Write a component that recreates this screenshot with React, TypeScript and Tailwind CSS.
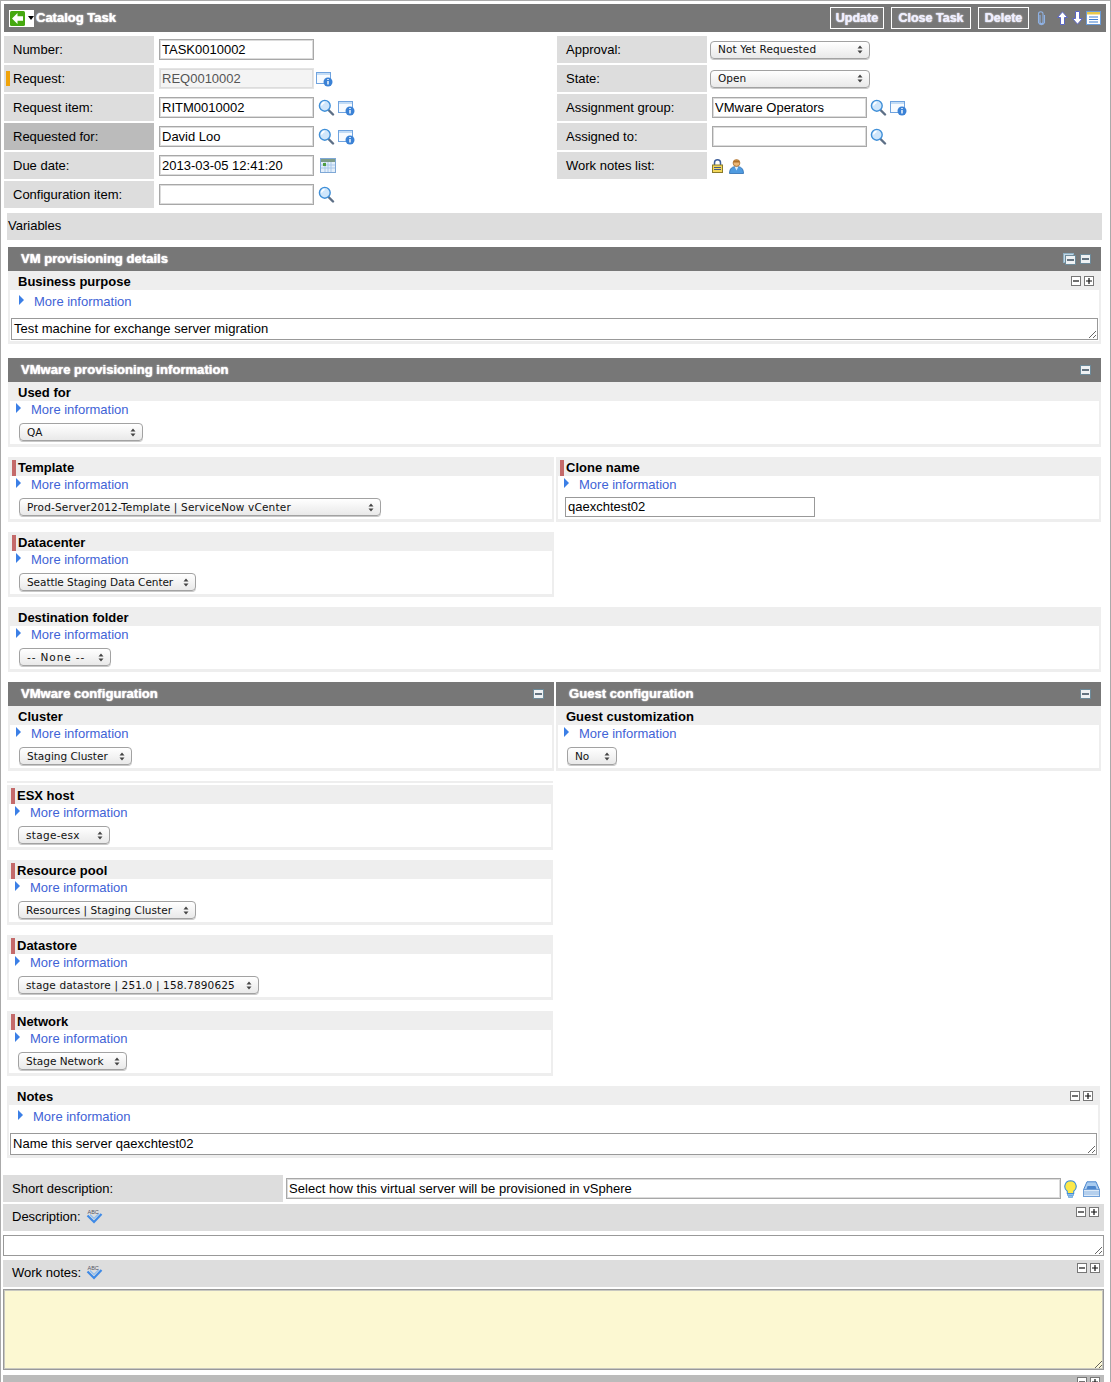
import React from "react";

const sans = "font-['Liberation_Sans',Arial,sans-serif]";
const glow = "[text-shadow:0_0_1px_#fff,0_0_2px_rgba(255,255,255,0.6)]";

const SearchIcon = () => (
  <svg width="17" height="17" viewBox="0 0 17 17" className="shrink-0">
    <path d="M10 10.5l5 5" stroke="#5d6f86" strokeWidth="2.4" strokeLinecap="round" />
    <circle cx="6.8" cy="6.8" r="5.4" fill="#cfe6fb" stroke="#3f8fd8" strokeWidth="1.4" />
    <path d="M3.6 6.5a3.4 3.4 0 0 1 3-3" stroke="#fff" strokeWidth="1.4" fill="none" />
  </svg>
);

const InfoIcon = () => (
  <svg width="17" height="16" viewBox="0 0 17 16" className="shrink-0">
    <rect x="0.5" y="1.5" width="14" height="11" fill="#f7fbff" stroke="#6fa3df" />
    <rect x="1" y="2" width="13" height="2" fill="#c3dcf5" />
    <circle cx="12" cy="11" r="4.5" fill="#3b82d6" />
    <path d="M12 10v3.4M12 8v1" stroke="#fff" strokeWidth="1.4" />
  </svg>
);

const CalendarIcon = () => (
  <svg width="16" height="15" viewBox="0 0 16 15" className="shrink-0">
    <rect x="0.5" y="0.5" width="15" height="14" fill="#e4effa" stroke="#7fa8d6" />
    <rect x="1" y="1" width="14" height="3" fill="#7d9c88" />
    <path d="M1 7h14M1 10h14M5 4v10M8 4v10M11 4v10" stroke="#a9c8ea" strokeWidth="1" />
    <rect x="3" y="5" width="3" height="3" fill="#4f9f40" />
  </svg>
);

const LockIcon = () => (
  <svg width="11" height="14" viewBox="0 0 11 14">
    <path d="M2.5 6V3.8a3 3 0 0 1 6 0V6" fill="none" stroke="#3e5f9a" strokeWidth="1.5" />
    <rect x="0.5" y="6" width="10" height="7.5" fill="#f3d75a" stroke="#8a7a2a" />
    <path d="M2 8.5h7M2 10.5h7" stroke="#43598a" strokeWidth="1" />
  </svg>
);

const UserIcon = () => (
  <svg width="15" height="16" viewBox="0 0 15 16">
    <path d="M0.5 15.5c0-5 2.5-7 7-7s7 2 7 7z" fill="#4f9be0" stroke="#2c6cb0" strokeWidth="0.8" />
    <path d="M5.5 8.5l2 4 2-4z" fill="#dceefc" />
    <circle cx="7.5" cy="5" r="3.4" fill="#eeb877" stroke="#a86f2f" strokeWidth="0.8" />
    <path d="M4.2 4.5c.4-3 6.2-3 6.6 0-2 .2-4.600-.2-6.600 0z" fill="#b0722c" />
  </svg>
);

const BulbIcon = () => (
  <svg width="13" height="18" viewBox="0 0 13 18">
    <path d="M6.500 0.800a5.700 5.700 0 0 0-3.200 10.400v2.300h6.400v-2.300A5.700 5.700 0 0 0 6.500 0.800z" fill="#fbe84a" stroke="#3f8fd8" strokeWidth="1.100" />
    <path d="M3.500 14h6v1.500h-6zM4.500 16h4v1.500h-4z" fill="#bcd5ee" stroke="#3f8fd8" strokeWidth="0.600" />
  </svg>
);

const TrayIcon = () => (
  <svg width="17" height="16" viewBox="0 0 17 16">
    <path d="M4 0.800h9l3.500 8H0.500z" fill="#a9ccf0" stroke="#4c86cc" />
    <path d="M4.500 5h8l1 3h-10z" fill="#4c86cc" />
    <rect x="0.500" y="8.500" width="16" height="7" fill="#dbe9f8" stroke="#6f9fd8" />
    <path d="M1 11h15M1 13h15" stroke="#8db5e2" />
  </svg>
);

const SpellIcon = () => (
  <svg width="18" height="15" viewBox="0 0 18 15">
    <path d="M2.500 6.500l6.500 6.500 7.500-8" fill="none" stroke="#3f8ae6" strokeWidth="2.200" />
    <path d="M5 5.500l4 4 5-5" fill="none" stroke="#8dbdf0" strokeWidth="1.200" />
    <text x="2.500" y="5" fontSize="5.500" fill="#556" fontFamily="Liberation Sans">ABC</text>
  </svg>
);

const ClipIcon = () => (
  <svg width="9" height="15" viewBox="0 0 9 15">
    <path d="M3 4v7a1.500 1.500 0 0 0 3 0V3a2 2 0 0 0-4.500 0v8.500a3.200 3.200 0 0 0 6 0V4" fill="none" stroke="#8fb2e4" strokeWidth="1.100" />
  </svg>
);

const ArrowIcon = ({ down = false }: { down?: boolean }) => (
  <svg width="11" height="14" viewBox="0 0 11 14" className={down ? "rotate-180" : ""}>
    <path d="M5.500 0.800L10.500 6.500H7.500v7H3.500v-7H0.500z" fill="#fff" stroke="#5a66c4" strokeWidth="1" />
  </svg>
);

const ListIcon = () => (
  <svg width="15" height="14" viewBox="0 0 15 14">
    <rect x="0.500" y="0.500" width="14" height="13" fill="#fff" stroke="#6a9bd8" />
    <rect x="1" y="1" width="13" height="2.500" fill="#e8c84a" />
    <path d="M3 6h9M3 8.500h9M3 11h9" stroke="#3f7fd0" strokeWidth="1.200" />
  </svg>
);

const BackIcon = () => (
  <div className="flex h-[17px] w-[25px] items-center bg-white pl-[1px]">
    <svg width="15" height="15" viewBox="0 0 15 15">
      <rect width="15" height="15" rx="1.500" fill="#45a80f" />
      <path d="M7.500 2L2 7.500 7.500 13V9.800H13V5.200H7.500z" fill="#fff" />
    </svg>
    <div className="ml-[3px] h-0 w-0 border-x-[3px] border-t-[4px] border-x-transparent border-t-black" />
  </div>
);

const SmallBox = ({ plus = false }: { plus?: boolean }) => (
  <svg width="10" height="10" viewBox="0 0 10 10" className="shrink-0">
    <rect x="0.500" y="0.500" width="9" height="9" fill="#fff" stroke="#777" />
    <path d={plus ? "M2 5h6M5 2v6" : "M2 5h6"} stroke="#111" strokeWidth="1.200" />
  </svg>
);

const PlusMinus = () => (
  <div className="flex gap-[3px]">
    <SmallBox />
    <SmallBox plus />
  </div>
);

const CollapseIcon = () => (
  <svg width="11" height="10" viewBox="0 0 11 10" className="shrink-0">
    <rect x="0.500" y="0.500" width="10" height="9" fill="#eef1f3" stroke="#6d8a99" />
    <path d="M2 5h7" stroke="#34495a" strokeWidth="1.500" />
  </svg>
);

const DoubleCollapseIcon = () => (
  <svg width="13" height="12" viewBox="0 0 13 12" className="shrink-0">
    <rect x="0.500" y="0.500" width="10" height="9" fill="#c4d8e6" stroke="#8fb0c4" />
    <rect x="2.500" y="2.500" width="10" height="9" fill="#eef1f3" stroke="#6d8a99" />
    <path d="M4 7h7" stroke="#34495a" strokeWidth="1.500" />
  </svg>
);

const TextBox = ({ value = "", className = "", muted = false }: { value?: string; className?: string; muted?: boolean }) => (
  <input
    readOnly
    value={value}
    className={`h-[21px] border border-[#a8a8a8] pl-[2px] text-[13px] leading-none shadow-[inset_0_0_0_1px_#dcdcdc] outline-none ${
      muted ? "bg-[#f4f4f4] text-[#555]" : "bg-white text-black"
    } ${className}`}
  />
);

const Area = ({ value = "", className = "" }: { value?: string; className?: string }) => (
  <textarea
    readOnly
    value={value}
    className={`block overflow-hidden border border-[#999] pl-[2px] pt-[2px] text-[13px] leading-[16px] tracking-[0.05px] text-black outline-none ${className}`}
  />
);

const MacSelect = ({ label, className = "" }: { label: string; className?: string }) => (
  <div
    className={`flex h-[18px] shrink-0 items-center justify-between rounded-[4px] border border-[#a2a2a2] bg-gradient-to-b from-white to-[#e9e9e9] pl-[7px] pr-[6px] font-['DejaVu_Sans',sans-serif] text-[10.5px] text-[#111] shadow-[0_1px_0_#c8c8c8] ${className}`}
  >
    <span className="whitespace-nowrap pt-[1px]">{label}</span>
    <svg width="6" height="9" viewBox="0 0 6 9" className="shrink-0">
      <path d="M3 0.500L5.500 3.500H0.500zM3 8.500L0.500 5.500H5.500z" fill="#444" />
    </svg>
  </div>
);

const MoreInfo = ({ wide = false }: { wide?: boolean }) => (
  <div className={`flex h-[16px] items-center pt-[1px] text-[13px] text-[#3f63d6] ${wide ? "pl-[9px] gap-[10px]" : "pl-[6px] gap-[10px]"}`}>
    <div className="mb-[3px] h-0 w-0 border-y-[5px] border-l-[5px] border-y-transparent border-l-[#3b7fe6]" />
    <span>More information</span>
  </div>
);

// one catalog variable: grey title strip, then white body with a thick pale edge
const Question = ({
  title,
  required = false,
  tools = false,
  className = "",
  children,
}: {
  title: string;
  required?: boolean;
  tools?: boolean;
  className?: string;
  children: React.ReactNode;
}) => (
  <div className={className}>
    <div className="relative flex h-[19px] items-center justify-between bg-[#eee] pl-[10px] pr-[7px] text-[13px] font-bold text-black">
      {required && <div className="absolute left-[4px] top-[3px] h-[16px] w-[4px] bg-[#c46a6a]" />}
      <span className="pt-[2px]">{title}</span>
      {tools && <PlusMinus />}
    </div>
    <div className="border-x-2 border-b-[3px] border-[#eee] bg-white">{children}</div>
  </div>
);

const SelectBody = ({ label, width }: { label: string; width: string }) => (
  <div className="h-[43px]">
    <MoreInfo />
    <div className="mt-[6px] pl-[9px]">
      <MacSelect label={label} className={width} />
    </div>
  </div>
);

const SectionHead = ({ title, double = false, className = "" }: { title: string; double?: boolean; className?: string }) => (
  <div className={`flex h-[24px] items-center justify-between bg-[#777] pl-[13px] pr-[10px] ${className}`}>
    <span className={`text-[13px] font-bold tracking-[0.05px] text-white ${glow}`}>{title}</span>
    <div className="flex items-center gap-[4px]">
      {double && <DoubleCollapseIcon />}
      <CollapseIcon />
    </div>
  </div>
);

const HeadButton = ({ label, className = "" }: { label: string; className?: string }) => (
  <div className={`flex h-[22px] items-center justify-center border border-white text-[12.5px] font-bold text-[#eef] ${glow} ${className}`}>
    {label}
  </div>
);

const FormRow = ({
  label,
  marker = false,
  dark = false,
  children,
}: {
  label: string;
  marker?: boolean;
  dark?: boolean;
  children?: React.ReactNode;
}) => (
  <div className="mb-[2px] flex h-[27px] items-center">
    <div className={`relative flex h-[27px] w-[150px] shrink-0 items-center pl-[9px] text-[13px] text-black ${dark ? "bg-[#bbb]" : "bg-[#ddd]"}`}>
      {marker && <div className="absolute left-[2px] top-[6px] h-[15px] w-[4px] bg-[#f0a30a]" />}
      {label}
    </div>
    {children}
  </div>
);

export default function App() {
  return (
    <div className={`h-[1382px] w-[1111px] overflow-hidden border-x border-t border-[#aaa] bg-white ${sans}`}>
      {/* Title bar */}
      <div className="ml-[3px] mr-[4px] mt-[3px] flex h-[28px] items-center justify-between bg-[#777] pl-[5px] pr-[5px]">
        <div className="flex items-center gap-[2px]">
          <BackIcon />
          <span className={`text-[13px] font-bold text-white ${glow}`}>Catalog Task</span>
        </div>
        <div className="flex items-center">
          <HeadButton label="Update" className="w-[54px]" />
          <HeadButton label="Close Task" className="ml-[7px] w-[80px]" />
          <HeadButton label="Delete" className="ml-[7px] w-[51px]" />
          <div className="ml-[8px]">
            <ClipIcon />
          </div>
          <div className="ml-[11px] flex items-center gap-[4px]">
            <ArrowIcon />
            <ArrowIcon down />
          </div>
          <div className="ml-[3px]">
            <ListIcon />
          </div>
        </div>
      </div>

      {/* Task fields */}
      <div className="ml-[3px] mt-[4px] flex">
        <div className="w-[553px]">
          <FormRow label="Number:">
            <TextBox value="TASK0010002" className="ml-[5px] w-[155px]" />
          </FormRow>
          <FormRow label="Request:" marker>
            <TextBox value="REQ0010002" muted className="ml-[5px] w-[155px] border-[#e4e4e4]" />
            <div className="ml-[2px]"><InfoIcon /></div>
          </FormRow>
          <FormRow label="Request item:">
            <TextBox value="RITM0010002" className="ml-[5px] w-[155px]" />
            <div className="ml-[4px] flex items-center gap-[3px]"><SearchIcon /><InfoIcon /></div>
          </FormRow>
          <FormRow label="Requested for:" dark>
            <TextBox value="David Loo" className="ml-[5px] w-[155px]" />
            <div className="ml-[4px] flex items-center gap-[3px]"><SearchIcon /><InfoIcon /></div>
          </FormRow>
          <FormRow label="Due date:">
            <TextBox value="2013-03-05 12:41:20" className="ml-[5px] w-[155px]" />
            <div className="ml-[6px]"><CalendarIcon /></div>
          </FormRow>
          <FormRow label="Configuration item:">
            <TextBox className="ml-[5px] w-[155px]" />
            <div className="ml-[4px]"><SearchIcon /></div>
          </FormRow>
        </div>
        <div>
          <FormRow label="Approval:">
            <MacSelect label="Not Yet Requested" className="ml-[3px] w-[160px] tracking-[0.1px]" />
          </FormRow>
          <FormRow label="State:">
            <MacSelect label="Open" className="ml-[3px] w-[160px]" />
          </FormRow>
          <FormRow label="Assignment group:">
            <TextBox value="VMware Operators" className="ml-[5px] w-[155px]" />
            <div className="ml-[3px] flex items-center gap-[3px]"><SearchIcon /><InfoIcon /></div>
          </FormRow>
          <FormRow label="Assigned to:">
            <TextBox className="ml-[5px] w-[155px]" />
            <div className="ml-[3px]"><SearchIcon /></div>
          </FormRow>
          <FormRow label="Work notes list:">
            <div className="ml-[5px] flex items-center gap-[6px]"><LockIcon /><UserIcon /></div>
          </FormRow>
        </div>
      </div>

      <div className="ml-[6px] mt-[3px] flex h-[27px] w-[1095px] items-center bg-[#ddd] pb-[2px] pl-[1px] text-[13px] text-black">
        Variables
      </div>

      {/* Variables */}
      <div className="ml-[7px] w-[1093px]">
        <SectionHead title="VM provisioning details" double className="mt-[7px]" />
        <Question title="Business purpose" tools>
          <div className="h-[51px] pt-[3px]">
            <MoreInfo wide />
            <Area value="Test machine for exchange server migration" className="ml-px mt-[9px] h-[22px] w-[1087px]" />
          </div>
        </Question>

        <SectionHead title="VMware provisioning information" className="mt-[14px]" />
        <Question title="Used for">
          <SelectBody label="QA" width="w-[124px]" />
        </Question>

        <div className="mt-[10px] flex gap-[2px]">
          <Question title="Template" required className="w-[546px]">
            <SelectBody label="Prod-Server2012-Template | ServiceNow vCenter" width="w-[362px] tracking-[0.18px]" />
          </Question>
          <Question title="Clone name" required className="w-[545px]">
            <div className="h-[43px]">
              <MoreInfo />
              <input readOnly value="qaexchtest02" className="ml-[7px] mt-[5px] block h-[20px] w-[250px] border border-[#999] pb-[1px] pl-[2px] text-[13px] text-black outline-none" />
            </div>
          </Question>
        </div>

        <Question title="Datacenter" required className="mt-[10px] w-[546px]">
          <SelectBody label="Seattle Staging Data Center" width="w-[177px] tracking-[-0.06px]" />
        </Question>

        <Question title="Destination folder" className="mt-[10px]">
          <SelectBody label="-- None --" width="w-[92px] tracking-[0.9px]" />
        </Question>

        <div className="mt-[10px] flex gap-[2px]">
          <div className="w-[546px]">
            <SectionHead title="VMware configuration" />
            <Question title="Cluster">
              <SelectBody label="Staging Cluster" width="w-[113px]" />
            </Question>
          </div>
          <div className="w-[545px]">
            <SectionHead title="Guest configuration" />
            <Question title="Guest customization">
              <SelectBody label="No" width="w-[50px]" />
            </Question>
          </div>
        </div>
      </div>

      <div className="ml-[6px] w-[546px]">
        <div className="mt-[10px] h-[4px] border-t-2 border-[#eee]" />
        <Question title="ESX host" required>
          <SelectBody label="stage-esx" width="w-[92px] tracking-[0.3px]" />
        </Question>
        <Question title="Resource pool" required className="mt-[10px]">
          <SelectBody label="Resources | Staging Cluster" width="w-[178px] tracking-[0.06px]" />
        </Question>
        <Question title="Datastore" required className="mt-[10px]">
          <SelectBody label="stage datastore | 251.0 | 158.7890625" width="w-[241px] tracking-[0.15px]" />
        </Question>
        <Question title="Network" required className="mt-[11px]">
          <SelectBody label="Stage Network" width="w-[109px]" />
        </Question>
      </div>

      <Question title="Notes" tools className="ml-[6px] mt-[10px] w-[1093px]">
        <div className="h-[50px] pt-[3px]">
          <MoreInfo wide />
          <Area value="Name this server qaexchtest02" className="ml-px mt-[9px] h-[22px] w-[1087px]" />
        </div>
      </Question>

      {/* Bottom fields */}
      <div className="ml-[2px] mt-[17px] flex h-[27px] w-[1101px] items-center">
        <div className="flex h-[27px] w-[280px] items-center bg-[#ddd] pl-[9px] text-[13px] text-black">Short description:</div>
        <TextBox value="Select how this virtual server will be provisioned in vSphere" className="ml-[3px] w-[775px] tracking-[0.03px]" />
        <div className="ml-[3px] flex items-center gap-[6px]"><BulbIcon /><TrayIcon /></div>
      </div>

      <div className="ml-[2px] mt-[2px] flex h-[27px] w-[1101px] items-start justify-between bg-[#ddd] pl-[9px] pr-[5px] text-[13px] text-black">
        <div className="flex h-[25px] items-center gap-[4px]">Description: <SpellIcon /></div>
        <div className="mt-[3px]"><PlusMinus /></div>
      </div>
      <Area className="ml-[2px] mt-[4px] h-[21px] w-[1101px]" />

      <div className="ml-[2px] mt-[4px] flex h-[27px] w-[1101px] items-start justify-between bg-[#ddd] pl-[9px] pr-[4px] text-[13px] text-black">
        <div className="flex h-[25px] items-center gap-[4px]">Work notes: <SpellIcon /></div>
        <div className="mt-[3px]"><PlusMinus /></div>
      </div>
      <Area className="ml-[2px] mt-[2px] h-[81px] w-[1101px] bg-[#fcf8d2] shadow-[inset_0_0_0_1px_#c8c8c0]" />

      <div className="ml-[2px] mt-[5px] flex h-[10px] w-[1101px] justify-end bg-[#bbb] pr-[4px] pt-[2px]">
        <PlusMinus />
      </div>
    </div>
  );
}
